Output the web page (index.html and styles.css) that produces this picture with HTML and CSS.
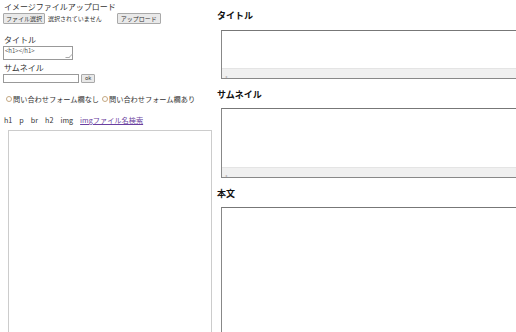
FILE: index.html
```html
<!DOCTYPE html>
<html lang="ja">
<head>
	<meta charset="UTF-8">
	<title>記事作成</title>
	<link rel="stylesheet" href="styles.css">
</head>
<body>
	<div class="page">
		<div class="left">
			<div class="label first">イメージファイルアップロード</div>
			<div class="upload-row">
				<button class="btn">ファイル選択</button>
				<span class="no-file">選択されていません</span>
				<button class="btn upload">アップロード</button>
			</div>

			<div class="label title-label">タイトル</div>
			<div class="title-input">&lt;h1&gt;&lt;/h1&gt;<span class="grip"></span></div>

			<div class="label">サムネイル</div>
			<div class="thumb-row">
				<div class="thumb-input"></div>
				<button class="btn ok">ok</button>
			</div>

			<div class="radios">
				<label><span class="radio"></span>問い合わせフォーム欄なし</label>
				<label><span class="radio"></span>問い合わせフォーム欄あり</label>
			</div>

			<div class="tags">
				<span>h1</span>
				<span>p</span>
				<span>br</span>
				<span>h2</span>
				<span>img</span>
				<a href="#">imgファイル名検索</a>
			</div>

			<div class="editor"></div>
		</div>

		<div class="right">
			<h3>タイトル</h3>
			<div class="preview short">
				<div class="scroll"><span class="arrow">◂</span></div>
			</div>

			<h3>サムネイル</h3>
			<div class="preview mid">
				<div class="scroll"><span class="arrow">◂</span></div>
			</div>

			<h3>本文</h3>
			<div class="preview body-box"></div>
		</div>
	</div>
</body>
</html>
```

FILE: styles.css
```css
body {
	margin: 0;
	font-family: "Noto Sans CJK JP", "Liberation Sans", sans-serif;
	font-size: 8px;
	color: #333;
	background: #fff;
	overflow: hidden;
}
.page {
	display: flex;
	height: 332px;
	overflow: hidden;
}

/* left column */
.left {
	width: 212px;
	flex-shrink: 0;
	padding-left: 3px;
	box-sizing: border-box;
}
.label {
	line-height: 10px;
	padding-left: 1px;
}
.label.first {
	margin-top: 2px;
}
.btn {
	font-family: inherit;
	font-size: 6px;
	color: #333;
	background: #e9e9e9;
	border: 1px solid #a9a9a9;
	border-radius: 1px;
	height: 11px;
	padding: 0 2px;
	line-height: 9px;
}
.upload-row {
	display: flex;
	align-items: center;
	height: 11px;
	margin-top: 1px;
}
.no-file {
	font-size: 6px;
	margin-left: 3px;
}
.upload {
	margin-left: 15px;
	padding: 0 3px;
}
.title-label {
	margin-top: 11px;
}
.title-input {
	position: relative;
	width: 70px;
	height: 14px;
	box-sizing: border-box;
	border: 1px solid #999;
	font-size: 6px;
	line-height: 7px;
	padding-left: 1px;
	color: #555;
	margin-top: 1px;
}
.grip {
	position: absolute;
	right: 1px;
	bottom: 1px;
	width: 3px;
	height: 3px;
	border-right: 1px solid #aaa;
	border-bottom: 1px solid #aaa;
	transform: skew(-45deg);
}
.title-input + .label {
	margin-top: 3px;
}
.thumb-row {
	display: flex;
	align-items: center;
	margin-top: 1px;
}
.thumb-input {
	width: 76px;
	height: 9px;
	border: 1px solid #999;
	box-sizing: border-box;
}
.ok {
	height: 9px;
	margin-left: 2px;
	padding: 0 3px;
	line-height: 7px;
	font-size: 5.5px;
}
.radios {
	margin-top: 11px;
	padding-left: 3px;
	display: flex;
	gap: 3px;
	line-height: 10px;
	font-size: 7.2px;
}
.radio {
	display: inline-block;
	width: 4px;
	height: 4px;
	border: 1px solid #c4a882;
	border-radius: 50%;
	margin-right: 1px;
	vertical-align: 0;
}
.tags {
	margin-top: 11px;
	line-height: 10px;
	font-size: 7.2px;
	padding-left: 1px;
	display: flex;
	gap: 7px;
}
.tags a {
	color: #6b3fa0;
}
.editor {
	margin: 5px 0 0 5px;
	height: 220px;
	border: 1px solid #ccc;
	border-bottom: none;
}

/* right column: previews */
.right {
	flex: 1;
	padding-left: 5px;
	overflow: hidden;
}
.right h3 {
	margin: 11px 0 0 0;
	font-size: 9px;
	line-height: 10px;
	font-weight: bold;
	color: #111;
}
.preview {
	position: relative;
	margin: 9px 0 0 4px;
	width: 320px;
	border: 1px solid #888;
	border-top-color: #777;
	box-sizing: border-box;
}
.preview.short {
	height: 49px;
}
.preview.mid {
	height: 70px;
	margin-top: 8px;
}
.preview.body-box {
	height: 130px;
	margin-top: 8px;
}
.scroll {
	position: absolute;
	left: 0;
	right: 0;
	bottom: 0;
	height: 9px;
	background: #f0f0f0;
	border-top: 1px solid #e4e4e4;
}
.arrow {
	font-size: 4px;
	color: #aaa;
	margin-left: 3px;
	line-height: 9px;
}
```
